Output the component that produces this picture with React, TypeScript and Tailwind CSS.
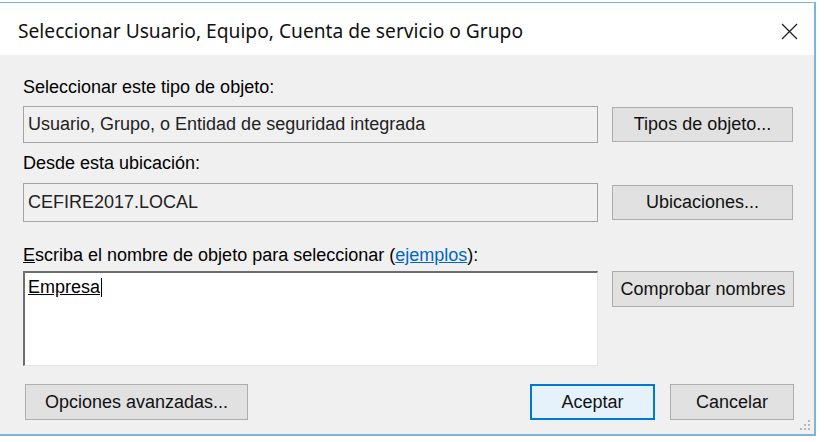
import React from 'react';

// Cuadro de diálogo "Seleccionar Usuario, Equipo..." de Windows
const body = { fontFamily: '"Liberation Sans", Arial, sans-serif' };
const title = { fontFamily: '"Noto Sans", "Open Sans", sans-serif' };

function Btn({ children, className = '' }: { children: React.ReactNode; className?: string }) {
    return (
        <div className={`flex items-center justify-center bg-[#e1e1e1] border border-[#adadad] text-[18px] text-[#111] ${className}`}>
            {children}
        </div>
    );
}

export default function App() {
    return (
        <div className="w-[824px] h-[442px] bg-white overflow-hidden">
            <div className="mt-[2px] w-[816px] h-[434px] border-t border-r-2 border-b-2 border-[#7db4de] flex flex-col">
                {/* barra de título */}
                <div className="h-[52px] bg-white flex items-center justify-between pl-[18px] pr-[16px] pt-[4px]" style={title}>
                    <span className="text-[19.2px] text-[#111]">Seleccionar Usuario, Equipo, Cuenta de servicio o Grupo</span>
                    <svg width="17" height="17" viewBox="0 0 17 17">
                        <path d="M1 1 L16 16 M16 1 L1 16" stroke="#222" strokeWidth="1.3" />
                    </svg>
                </div>

                <div className="flex-1 bg-[#f0f0f0] pl-[23px] pr-[20px] relative" style={body}>
                    <div className="mt-[22px] h-[20px] leading-[20px] text-[18px] text-black">Seleccionar este tipo de objeto:</div>
                    <div className="mt-[9px] flex items-center gap-[14px]">
                        <div className="w-[575px] h-[37px] border border-[#a3a3a3] bg-[#f0f0f0] flex items-center pl-[4px] text-[18px] text-[#222]">
                            Usuario, Grupo, o Entidad de seguridad integrada
                        </div>
                        <Btn className="w-[181px] h-[35px]">Tipos de objeto...</Btn>
                    </div>

                    <div className="mt-[10px] h-[20px] leading-[20px] text-[18px] text-black">Desde esta ubicación:</div>
                    <div className="mt-[10px] flex items-center gap-[14px]">
                        <div className="w-[575px] h-[39px] border border-[#a3a3a3] bg-[#f0f0f0] flex items-center pl-[4px] text-[18px] text-[#222]">
                            CEFIRE2017.LOCAL
                        </div>
                        <Btn className="w-[181px] h-[35px]">Ubicaciones...</Btn>
                    </div>

                    <div className="mt-[23px] h-[20px] leading-[20px] text-[18px] text-black">
                        <span className="underline">E</span>scriba el nombre de objeto para seleccionar (
                        <span className="text-[#0066cc] underline">ejemplos</span>):
                    </div>
                    <div className="mt-[6px] flex items-start gap-[14px]">
                        <div className="w-[575px] h-[95px] bg-white border-t-2 border-l-2 border-[#6d6d6d] border-r border-b border-r-[#e3e3e3] border-b-[#e3e3e3] pl-[3px] pt-[3px]">
                            <span className="inline-block leading-[19px] text-[18px] text-black underline border-r border-black pr-[1px]">Empresa</span>
                        </div>
                        <Btn className="w-[182px] h-[36px]">Comprobar nombres</Btn>
                    </div>

                    <div className="mt-[18px] flex items-center pl-[2px]">
                        <Btn className="w-[223px] h-[36px]">Opciones avanzadas...</Btn>
                        <div className="flex-1" />
                        <div className="w-[125px] h-[36px] flex items-center justify-center bg-[#e5f1fb] border-2 border-[#0078d7] text-[18px] text-[#111]">
                            Aceptar
                        </div>
                        <Btn className="ml-[15px] w-[124px] h-[36px]">Cancelar</Btn>
                    </div>

                    {/* agarre de redimensión */}
                    <svg width="12" height="12" viewBox="0 0 12 12" className="absolute right-[3px] bottom-[3px]">
                        <g fill="#b8b8b8">
                            <rect x="9" y="1" width="2" height="2" />
                            <rect x="5" y="5" width="2" height="2" />
                            <rect x="9" y="5" width="2" height="2" />
                            <rect x="1" y="9" width="2" height="2" />
                            <rect x="5" y="9" width="2" height="2" />
                            <rect x="9" y="9" width="2" height="2" />
                        </g>
                    </svg>
                </div>
            </div>
        </div>
    );
}
